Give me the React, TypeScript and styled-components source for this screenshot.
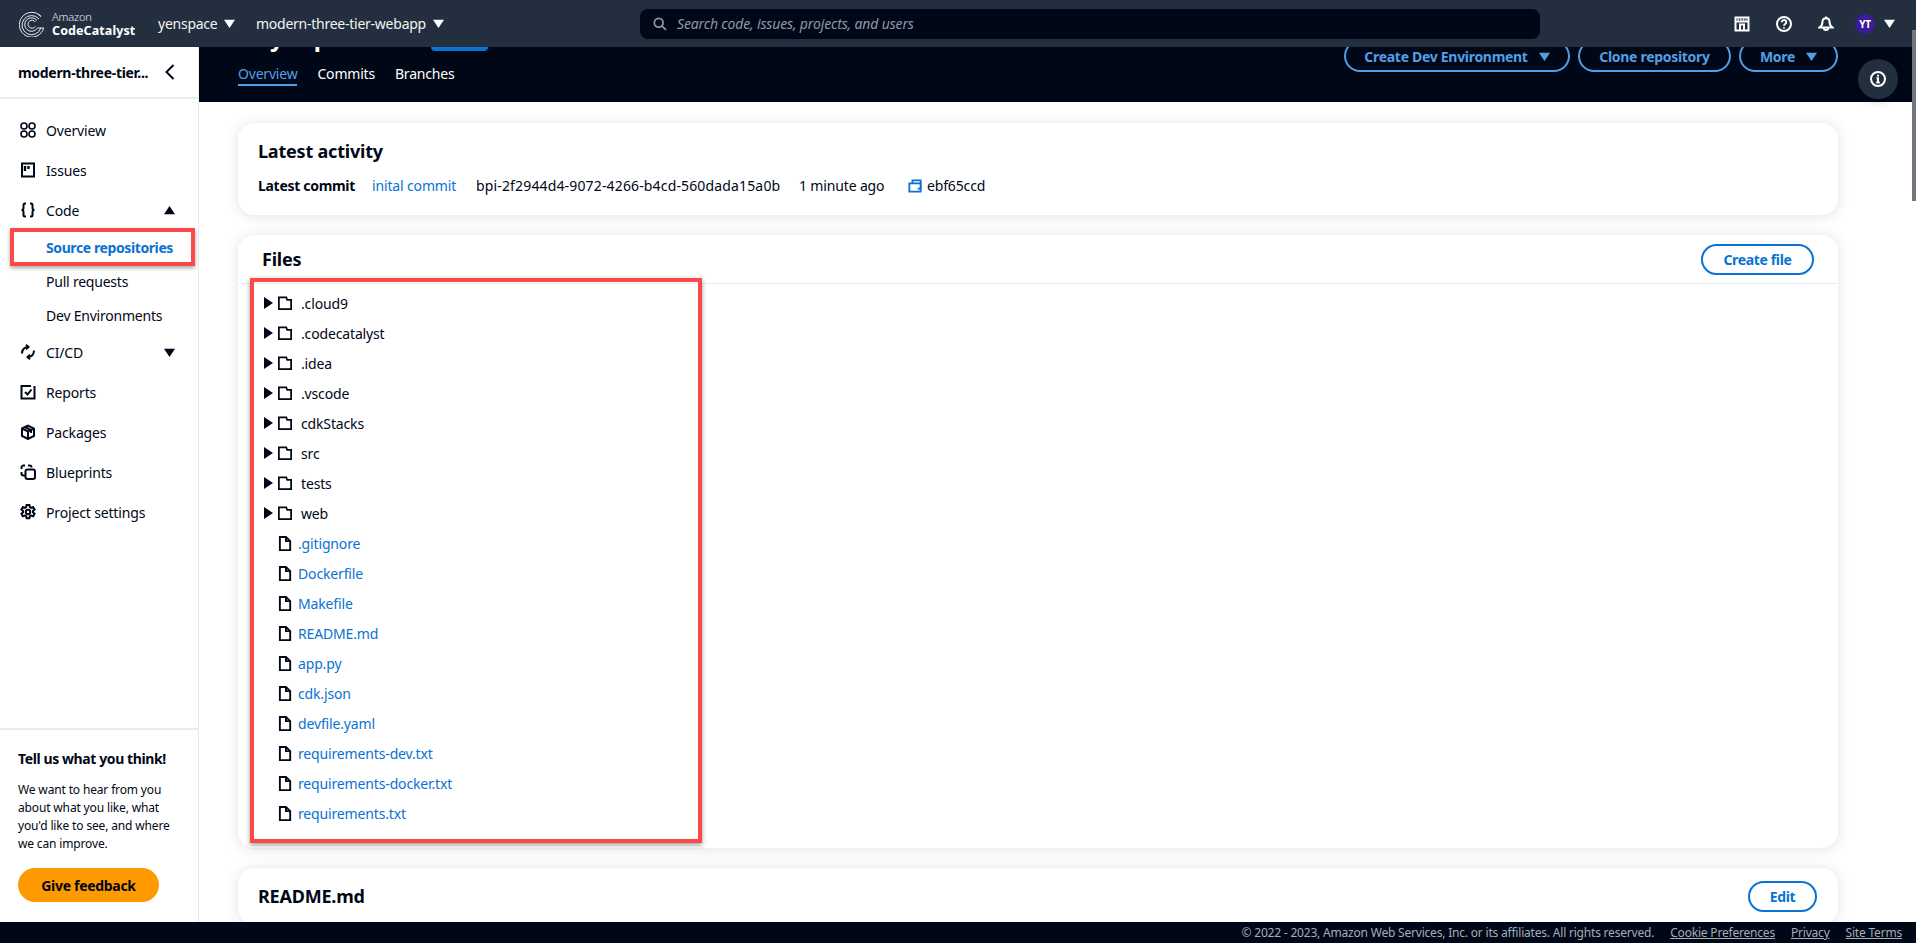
import React from "react";
import styled, { createGlobalStyle } from "styled-components";

const Global = createGlobalStyle`
  html, body, #root { height: 100%; margin: 0; }
  body { overflow: hidden; background: #fff; color: #000716; font-family: "Noto Sans", "Open Sans", Arial, sans-serif; font-size: 14px; letter-spacing: -0.15px; }
  * { box-sizing: border-box; }
`;

const Page = styled.div`display:flex;flex-direction:column;height:100vh;position:relative;`;
const TopBar = styled.header`height:47px;flex:none;background:#232f3e;display:flex;align-items:center;padding:0 21px 0 19px;color:#fff;position:relative;z-index:2;`;
const Brand = styled.div`display:flex;align-items:center;gap:7px;width:139px;`;
const BrandText = styled.div`display:flex;flex-direction:column;`;
const BrandTop = styled.span`font-size:11px;line-height:13px;font-weight:300;color:#e4e7ea;`;
const BrandName = styled.span`font-size:12.5px;line-height:15px;font-weight:700;white-space:nowrap;letter-spacing:0.1px;`;
const Selector = styled.div<{ $w: number }>`display:flex;align-items:center;gap:7px;width:${p => p.$w}px;font-size:14px;letter-spacing:-0.25px;white-space:nowrap;color:#f2f3f3;`;
const Search = styled.div`margin-left:auto;width:900px;height:30px;background:#000716;border-radius:8px;display:flex;align-items:center;padding-left:13px;gap:10px;`;
const SearchHint = styled.span`font-style:italic;font-size:14px;color:#8d99a8;white-space:nowrap;`;
const TopIcons = styled.div`margin-left:194px;display:flex;align-items:center;gap:26px;`;
const Account = styled.div`display:flex;align-items:center;gap:9px;margin-left:-5px;`;
const Avatar = styled.div`width:20px;height:20px;border-radius:50%;background:#3b1d96;color:#fff;font-size:10px;font-weight:700;display:flex;align-items:center;justify-content:center;`;
const Scrollbar = styled.div`position:absolute;right:0;top:30px;width:4px;height:171px;background:#6f7680;z-index:3;`;

const Middle = styled.div`flex:1;min-height:0;display:flex;`;
const Sidebar = styled.aside`width:199px;flex:none;border-right:1px solid #e9ebed;display:flex;flex-direction:column;`;
const SideHead = styled.div`height:52px;flex:none;border-bottom:2px solid #e9ebed;display:flex;align-items:center;justify-content:space-between;padding:0 20px 0 18px;font-weight:700;font-size:14px;letter-spacing:-0.3px;white-space:nowrap;margin-right:-1px;`;
const Nav = styled.nav`padding-top:11px;display:flex;flex-direction:column;`;
const NavRow = styled.div`height:40px;display:flex;align-items:center;padding:0 23px 0 20px;gap:10px;font-size:14px;`;
const NavLabel = styled.span`flex:1;white-space:nowrap;`;
const SubRow = styled.div<{ $active?: boolean }>`height:34px;display:flex;align-items:center;padding-left:46px;font-size:14px;white-space:nowrap;position:relative;font-weight:${p => (p.$active ? 700 : 400)};letter-spacing:${p => (p.$active ? "-0.4px" : "-0.22px")};color:${p => (p.$active ? "#0972d3" : "#000716")};`;
const SideMark = styled.div`position:absolute;left:10px;top:-2px;width:185px;height:38px;border:4px solid #fb4848;box-shadow:0 2px 4px rgba(0,0,0,.35);`;
const Feedback = styled.div`margin-top:auto;border-top:2px solid #e9ebed;padding:19px 18px 20px;margin-right:-1px;`;
const FeedbackTitle = styled.div`font-weight:700;font-size:14px;letter-spacing:-0.4px;line-height:20px;white-space:nowrap;`;
const FeedbackText = styled.p`margin:12px 0 15px;font-size:12px;line-height:18px;`;
const FeedbackButton = styled.div`width:141px;height:34px;border-radius:17px;background:#f90;font-weight:700;font-size:14px;letter-spacing:-0.3px;display:flex;align-items:center;justify-content:center;`;

const Main = styled.main`flex:1;min-width:0;overflow:hidden;display:flex;flex-direction:column;`;
const Hero = styled.div`height:55px;flex:none;background:#000716;overflow:hidden;padding:0 78px 0 39px;display:flex;flex-direction:column;`;
const HeroTop = styled.div`height:26px;flex:none;margin-top:-23px;display:flex;justify-content:space-between;`;
const TitleRow = styled.div`display:flex;width:250px;justify-content:space-between;align-items:flex-end;height:26px;`;
const HeroTitle = styled.span`font-size:24px;line-height:26px;font-weight:700;color:#fff;margin-top:-6px;white-space:nowrap;`;
const Badge = styled.span`width:57px;height:20px;margin-bottom:-1px;background:#0972d3;border-radius:0 0 4px 4px;`;
const HeroActions = styled.div`display:flex;gap:8px;height:32px;margin-top:16px;`;
const HeroButton = styled.div<{ $w: number }>`width:${p => p.$w}px;height:32px;border:2px solid #539fe5;border-radius:16px;color:#539fe5;font-weight:700;font-size:14px;letter-spacing:-0.3px;white-space:nowrap;display:flex;align-items:center;justify-content:center;gap:11px;`;
const Tabs = styled.div`display:flex;gap:20px;margin-top:8px;`;
const Tab = styled.div<{ $active?: boolean }>`height:28px;padding-top:6px;line-height:20px;font-size:14px;letter-spacing:-0.2px;white-space:nowrap;color:${p => (p.$active ? "#539fe5" : "#fff")};border-bottom:2px solid ${p => (p.$active ? "#539fe5" : "transparent")};`;
const InfoFab = styled.div`position:absolute;left:1858px;top:59px;width:40px;height:40px;border-radius:20px;background:#232f3e;display:flex;align-items:center;justify-content:center;box-shadow:0 2px 10px rgba(0,7,22,.2);z-index:1;`;

const Cards = styled.div`padding:21px 78px 0 39px;display:flex;flex-direction:column;gap:20px;`;
const Card = styled.section`background:#fff;border-radius:16px;box-shadow:0 1px 14px rgba(0,7,22,.12);position:relative;flex:none;`;
const ActivityBody = styled.div`height:92px;padding:14px 20px 0;`;
const CardTitle = styled.h2`margin:0;font-size:18px;line-height:28px;font-weight:700;letter-spacing:-0.2px;`;
const CommitRow = styled.div`display:flex;align-items:center;margin-top:11px;font-size:14px;line-height:20px;white-space:nowrap;`;
const CommitLabel = styled.b`width:114px;letter-spacing:-0.3px;`;
const CommitLink = styled.span`color:#0972d3;width:104px;`;
const CommitId = styled.span`width:323px;letter-spacing:0.15px;`;
const CommitAge = styled.span`width:109px;`;
const CommitHash = styled.span`display:flex;align-items:center;gap:5px;`;
const FilesHead = styled.div`height:49px;border-bottom:1px solid #e9ebed;display:flex;align-items:center;justify-content:space-between;padding:0 24px;`;
const OutlineButton = styled.div<{ $w: number }>`width:${p => p.$w}px;height:31px;border:2px solid #0972d3;border-radius:16px;color:#0972d3;font-weight:700;font-size:14px;letter-spacing:-0.35px;display:flex;align-items:center;justify-content:center;`;
const Tree = styled.div`position:relative;padding:4px 0 20px 25px;height:564px;`;
const Row = styled.div<{ $file?: boolean }>`height:30px;display:flex;align-items:center;font-size:14px;white-space:nowrap;color:${p => (p.$file ? "#0972d3" : "#000716")};padding-left:${p => (p.$file ? 15 : 0)}px;`;
const TreeCaret = styled.span`width:15px;display:flex;margin-left:-1px;margin-right:1px;`;
const RowName = styled.span<{ $file?: boolean }>`margin-left:${p => (p.$file ? 5 : 9)}px;`;
const TreeMark = styled.div`position:absolute;left:12px;top:-6px;width:452px;height:565px;border:4px solid #fb4848;box-shadow:0 2px 5px rgba(0,0,0,.4);`;
const ReadmeHead = styled.div`height:56px;display:flex;align-items:center;justify-content:space-between;padding:0 21px 0 20px;`;

const Footer = styled.footer`height:21px;flex:none;background:#000716;color:#a4aeb8;font-size:12px;letter-spacing:-0.2px;display:flex;align-items:center;justify-content:flex-end;gap:16px;padding-right:14px;white-space:nowrap;`;
const FooterLink = styled.span`text-decoration:underline;`;

const Ico = styled.svg`flex:none;display:block;fill:none;stroke:currentColor;stroke-width:2;`;

const Caret = ({ up, right, color = "currentColor", size = 11 }: { up?: boolean; right?: boolean; color?: string; size?: number }) => (
  <svg width={size} height={size} viewBox="0 0 12 12" style={{ flex: "none", display: "block" }}>
    <polygon fill={color} points={up ? "0,10 12,10 6,1" : right ? "2,0 2,12 11,6" : "0,2 12,2 6,11"} />
  </svg>
);

const Logo = () => (
  <svg width="26" height="26" viewBox="0 0 26 26" fill="none" stroke="#fff" strokeWidth="0.9">
    <path d="M22 5.5A12.4 12.4 0 1 0 24.7 17" />
    <path d="M20 8A9.6 9.6 0 1 0 21.8 17" />
    <path d="M18 9.5A6.8 6.8 0 1 0 18.4 17" />
    <path d="M16.4 11A4 4 0 1 0 16.4 15.4" />
    <path d="M22 5.5L19 3M24.7 17H18.4" />
  </svg>
);

const icons: Record<string, React.ReactNode> = {
  overview: <g strokeWidth="1.6"><circle cx="4" cy="4" r="3" /><circle cx="12" cy="4" r="3" /><circle cx="4" cy="12" r="3" /><circle cx="12" cy="12" r="3" /></g>,
  issues: <><rect x="2" y="1.5" width="12" height="13" /><path d="M5 4v5M8.5 4v3" strokeWidth="2.4" /></>,
  code: <><path d="M6 1.5H5C4 1.5 3.5 2 3.5 3v3C3.5 7 3 8 1.5 8c1.5 0 2 1 2 2v3c0 1 .5 1.5 1.5 1.5h1" /><path d="M10 1.5h1c1 0 1.5.5 1.5 1.5v3c0 1 .5 2 2 2-1.5 0-2 1-2 2v3c0 1-.5 1.5-1.5 1.5h-1" /></>,
  cicd: <><path d="M2 9.5C2 6 4.5 3.5 8 3" /><path d="M6 .8 8.5 3 6 5.2" /><path d="M14 6.5C14 10 11.5 12.5 8 13" /><path d="M10 10.8 7.5 13 10 15.2" /></>,
  reports: <><path d="M11 2H1.5v12.5h13V2" /><path d="M5 8l2.5 2.5L11.5 5.5" /></>,
  packages: <><path d="M2 4.5 8 1.5l6 3v7.5l-6 3-6-3z" /><path d="M2 4.5 8 7.5l6-3M8 7.5v7M5 3l6 3v3" /></>,
  blueprints: <><rect x="5.5" y="5.5" width="9.5" height="9.5" rx="2" /><path d="M5 1.5H3.5a2 2 0 0 0-2 2V5M1.5 8v1.5a2 2 0 0 0 2 2H5M8 1.5h1.5a2 2 0 0 1 2 2" /></>,
  settings: <><path d="M6.6 1h2.8l.5 2.2 1.1.6 2.2-.7 1.4 2.4-1.7 1.5v1.2l1.7 1.6-1.4 2.4-2.2-.7-1.1.6-.5 2.2H6.6l-.5-2.2-1.1-.6-2.2.7-1.4-2.4 1.7-1.6V6.9L1.4 5.5l1.4-2.4 2.2.7 1.1-.6z" /><circle cx="8" cy="8" r="2.2" /></>,
  store: <><path d="M1.5 1.5h13v13h-13zM1.5 5.5h13" /><path d="M3.5 3.5h9" strokeDasharray="1.4 1.3" /><path d="M6 14.5V8.5h4v6" /></>,
  help: <><circle cx="8" cy="8" r="7" /><path d="M5.8 6.2A2.2 2.2 0 1 1 9.2 8c-.8.5-1.2.9-1.2 1.8" /><path d="M8 11.2v1.4" /></>,
  bell: <><path d="M8 2.2c-2.6 0-3.6 2-3.6 4.3 0 2.2-1 3.6-3 5h13.2c-2-1.4-3-2.8-3-5 0-2.3-1-4.3-3.6-4.3z" /><path d="M8 .5v1.5M5.8 11.8a2.2 2.2 0 0 0 4.4 0" /></>,
  info: <><circle cx="8" cy="8" r="7" /><path d="M6.5 7.2H8v4.3M6.2 11.5h3.6M8 3.8v1.8" /></>,
  search: <><circle cx="6.5" cy="6.5" r="5" /><path d="M10 10l4.8 4.8" /></>,
  file: <><path d="M2 1h6.5L13 5.5V15H2z" /><path d="M8.5 1v4.5H13" /></>,
  folder: <path d="M1 1.5h8.5l1 3H15V15H1z" />,
  copy: <><path d="M5 5h9.5v9.5H1.5V5z" /><path d="M5 5V1.5h9.5V11H11" /></>,
  back: <path d="M10.5 1 3.5 8l7 7" />,
};

const Icon = ({ name, size = 16, color }: { name: string; size?: number; color?: string }) => (
  <Ico width={size} height={size} viewBox="0 0 16 16" style={color ? { color } : undefined}>{icons[name]}</Ico>
);

const folders = [".cloud9", ".codecatalyst", ".idea", ".vscode", "cdkStacks", "src", "tests", "web"];
const files = [".gitignore", "Dockerfile", "Makefile", "README.md", "app.py", "cdk.json", "devfile.yaml", "requirements-dev.txt", "requirements-docker.txt", "requirements.txt"];

export default function App() {
  return (
    <Page>
      <Global />
      <TopBar>
        <Brand>
          <Logo />
          <BrandText>
            <BrandTop>Amazon</BrandTop>
            <BrandName>CodeCatalyst</BrandName>
          </BrandText>
        </Brand>
        <Selector $w={98}>yenspace <Caret color="#fff" /></Selector>
        <Selector $w={200}>modern-three-tier-webapp <Caret color="#fff" /></Selector>
        <Search>
          <Icon name="search" size={14} color="#8d99a8" />
          <SearchHint>Search code, issues, projects, and users</SearchHint>
        </Search>
        <TopIcons>
          <Icon name="store" />
          <Icon name="help" />
          <Icon name="bell" />
          <Account><Avatar>YT</Avatar><Caret color="#fff" /></Account>
        </TopIcons>
      </TopBar>
      <Scrollbar />
      <Middle>
        <Sidebar>
          <SideHead>modern-three-tier...<Icon name="back" /></SideHead>
          <Nav>
            <NavRow><Icon name="overview" /><NavLabel>Overview</NavLabel></NavRow>
            <NavRow><Icon name="issues" /><NavLabel>Issues</NavLabel></NavRow>
            <NavRow><Icon name="code" /><NavLabel>Code</NavLabel><Caret up /></NavRow>
            <SubRow $active>Source repositories<SideMark /></SubRow>
            <SubRow>Pull requests</SubRow>
            <SubRow>Dev Environments</SubRow>
            <NavRow><Icon name="cicd" /><NavLabel>CI/CD</NavLabel><Caret /></NavRow>
            <NavRow><Icon name="reports" /><NavLabel>Reports</NavLabel></NavRow>
            <NavRow><Icon name="packages" /><NavLabel>Packages</NavLabel></NavRow>
            <NavRow><Icon name="blueprints" /><NavLabel>Blueprints</NavLabel></NavRow>
            <NavRow><Icon name="settings" /><NavLabel>Project settings</NavLabel></NavRow>
          </Nav>
          <Feedback>
            <FeedbackTitle>Tell us what you think!</FeedbackTitle>
            <FeedbackText>We want to hear from you about what you like, what you'd like to see, and where we can improve.</FeedbackText>
            <FeedbackButton>Give feedback</FeedbackButton>
          </Feedback>
        </Sidebar>
        <Main>
          <Hero>
            <HeroTop>
              <TitleRow><HeroTitle>Any repo</HeroTitle><Badge /></TitleRow>
              <HeroActions>
                <HeroButton $w={226}>Create Dev Environment <Caret color="#539fe5" /></HeroButton>
                <HeroButton $w={153}>Clone repository</HeroButton>
                <HeroButton $w={99}>More <Caret color="#539fe5" /></HeroButton>
              </HeroActions>
            </HeroTop>
            <Tabs>
              <Tab $active>Overview</Tab>
              <Tab>Commits</Tab>
              <Tab>Branches</Tab>
            </Tabs>
          </Hero>
          <Cards>
            <Card>
              <ActivityBody>
                <CardTitle>Latest activity</CardTitle>
                <CommitRow>
                  <CommitLabel>Latest commit</CommitLabel>
                  <CommitLink>inital commit</CommitLink>
                  <CommitId>bpi-2f2944d4-9072-4266-b4cd-560dada15a0b</CommitId>
                  <CommitAge>1 minute ago</CommitAge>
                  <CommitHash><Icon name="copy" size={14} color="#0972d3" />ebf65ccd</CommitHash>
                </CommitRow>
              </ActivityBody>
            </Card>
            <Card>
              <FilesHead>
                <CardTitle>Files</CardTitle>
                <OutlineButton $w={113}>Create file</OutlineButton>
              </FilesHead>
              <Tree>
                {folders.map(n => (
                  <Row key={n}>
                    <TreeCaret><Caret right size={12} color="#000716" /></TreeCaret>
                    <Icon name="folder" size={14} />
                    <RowName>{n}</RowName>
                  </Row>
                ))}
                {files.map(n => (
                  <Row key={n} $file>
                    <Icon name="file" size={15} color="#000716" />
                    <RowName $file>{n}</RowName>
                  </Row>
                ))}
                <TreeMark />
              </Tree>
            </Card>
            <Card>
              <ReadmeHead>
                <CardTitle>README.md</CardTitle>
                <OutlineButton $w={69}>Edit</OutlineButton>
              </ReadmeHead>
            </Card>
          </Cards>
        </Main>
      </Middle>
      <InfoFab><Icon name="info" size={16} color="#fff" /></InfoFab>
      <Footer>
        <span>© 2022 - 2023, Amazon Web Services, Inc. or its affiliates. All rights reserved.</span>
        <FooterLink>Cookie Preferences</FooterLink>
        <FooterLink>Privacy</FooterLink>
        <FooterLink>Site Terms</FooterLink>
      </Footer>
    </Page>
  );
}
